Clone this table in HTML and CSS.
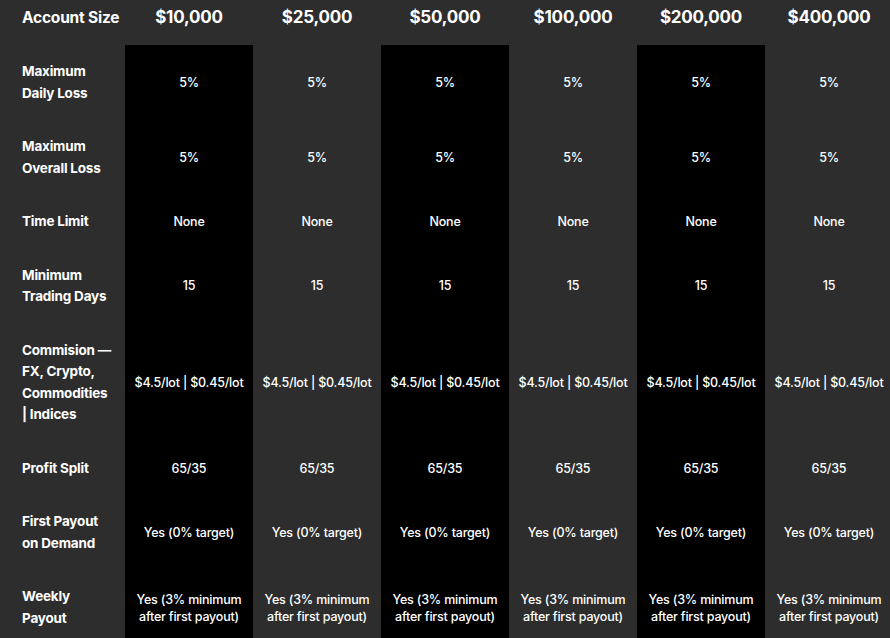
FILE: index.html
```html
<!DOCTYPE html>
<html lang="en">
<head>
<meta charset="utf-8">
<title>Account comparison</title>
<link rel="stylesheet" href="styles.css">
</head>
<body>
<table class="plans">
  <colgroup>
    <col class="col-label">
    <col class="col-plan"><col class="col-plan"><col class="col-plan">
    <col class="col-plan"><col class="col-plan"><col class="col-plan">
  </colgroup>
  <thead>
    <tr class="head-row">
      <th class="label">Account Size</th>
      <th>$10,000</th><th>$25,000</th><th>$50,000</th><th>$100,000</th><th>$200,000</th><th>$400,000</th>
    </tr>
  </thead>
  <tbody>
    <tr>
      <th class="label">Maximum<br>Daily Loss</th>
      <td>5%</td><td>5%</td><td>5%</td><td>5%</td><td>5%</td><td>5%</td>
    </tr>
    <tr>
      <th class="label">Maximum<br>Overall Loss</th>
      <td>5%</td><td>5%</td><td>5%</td><td>5%</td><td>5%</td><td>5%</td>
    </tr>
    <tr>
      <th class="label">Time Limit</th>
      <td>None</td><td>None</td><td>None</td><td>None</td><td>None</td><td>None</td>
    </tr>
    <tr>
      <th class="label">Minimum<br>Trading Days</th>
      <td>15</td><td>15</td><td>15</td><td>15</td><td>15</td><td>15</td>
    </tr>
    <tr>
      <th class="label">Commision —<br>FX, Crypto,<br>Commodities<br>| Indices</th>
      <td>$4.5/lot | $0.45/lot</td><td>$4.5/lot | $0.45/lot</td><td>$4.5/lot | $0.45/lot</td>
      <td>$4.5/lot | $0.45/lot</td><td>$4.5/lot | $0.45/lot</td><td>$4.5/lot | $0.45/lot</td>
    </tr>
    <tr>
      <th class="label">Profit Split</th>
      <td>65/35</td><td>65/35</td><td>65/35</td><td>65/35</td><td>65/35</td><td>65/35</td>
    </tr>
    <tr>
      <th class="label">First Payout<br>on Demand</th>
      <td>Yes (0% target)</td><td>Yes (0% target)</td><td>Yes (0% target)</td>
      <td>Yes (0% target)</td><td>Yes (0% target)</td><td>Yes (0% target)</td>
    </tr>
    <tr>
      <th class="label">Weekly<br>Payout</th>
      <td class="two">Yes (3% minimum<br>after first payout)</td><td class="two">Yes (3% minimum<br>after first payout)</td><td class="two">Yes (3% minimum<br>after first payout)</td>
      <td class="two">Yes (3% minimum<br>after first payout)</td><td class="two">Yes (3% minimum<br>after first payout)</td><td class="two">Yes (3% minimum<br>after first payout)</td>
    </tr>
  </tbody>
</table>
</body>
</html>
```
FILE: styles.css
```css
html, body {
  margin: 0;
  padding: 0;
  background: #2d2d2d;
  overflow: hidden;
}
body {
  font-family: "Inter", "Liberation Sans", sans-serif;
  color: #ffffff;
}
.plans {
  border-collapse: collapse;
  table-layout: fixed;
  width: 893px;
}
.col-label { width: 125px; }
.col-plan { width: 128px; }

.plans th, .plans td {
  padding: 16px 0;
  text-align: center;
  vertical-align: middle;
  line-height: 21.5px;
}
.plans td {
  font-size: 12.5px;
  font-weight: 500;
  letter-spacing: -0.2px;
}
.plans td.two {
  line-height: 17px;
}
.plans .label {
  text-align: left;
  padding-left: 22px;
  font-size: 13.5px;
  font-weight: 700;
  letter-spacing: -0.2px;
}
.head-row th {
  padding: 7px 0 16.5px;
  font-size: 17px;
  font-weight: 700;
  letter-spacing: -0.2px;
}
.head-row th.label {
  font-size: 15.5px;
}
tbody td:nth-child(2n) {
  background: #000000;
}
```
